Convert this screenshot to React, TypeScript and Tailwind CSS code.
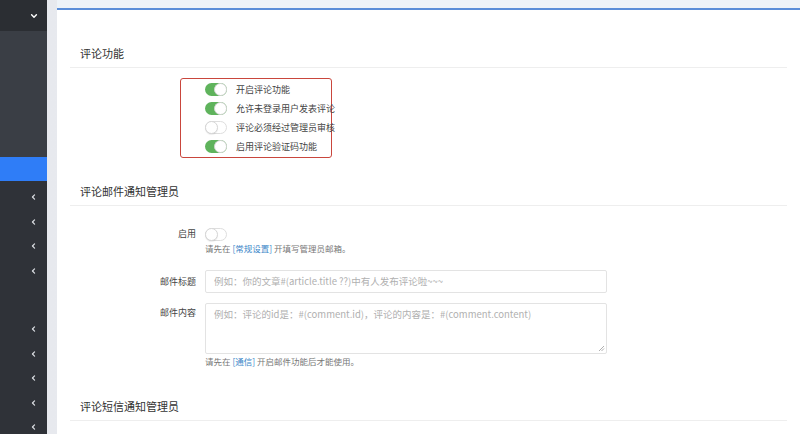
import React from "react";

const font = { fontFamily: '"Noto Sans CJK SC", "Noto Sans", sans-serif' };

function ChevronDown() {
  return (
    <svg width="8" height="8" viewBox="0 0 10 10" className="text-white">
      <path d="M2 3.5 L5 6.5 L8 3.5" fill="none" stroke="currentColor" strokeWidth="1.8" strokeLinecap="round" strokeLinejoin="round" />
    </svg>
  );
}

function ChevronLeft() {
  return (
    <svg width="7" height="8" viewBox="0 0 10 10" className="text-[#d9dce1]">
      <path d="M6.5 2 L3.5 5 L6.5 8" fill="none" stroke="currentColor" strokeWidth="1.8" strokeLinecap="round" strokeLinejoin="round" />
    </svg>
  );
}

function Toggle({ on }: { on: boolean }) {
  return on ? (
    <div className="w-[22px] h-[13px] rounded-full bg-[#5fb35c] relative shrink-0">
      <div className="absolute right-0 top-0 w-[13px] h-[13px] rounded-full bg-white border border-[#d6d6d6]" />
    </div>
  ) : (
    <div className="w-[22px] h-[13px] rounded-full bg-white border border-[#dedede] relative shrink-0">
      <div className="absolute left-[-1px] top-[-1px] w-[13px] h-[13px] rounded-full bg-white border border-[#d6d6d6] shadow-[0_1px_1px_rgba(0,0,0,0.08)]" />
    </div>
  );
}

function SectionHeading({ children }: { children: React.ReactNode }) {
  return (
    <div className="mx-[13px] border-b border-[#eeeeee] pb-[4px]">
      <div className="h-[20px] leading-[20px] pl-[10px] text-[11px] text-[#333]">{children}</div>
    </div>
  );
}

const sideRows: { h: number; chevron: boolean }[] = [
  { h: 24.5, chevron: true },
  { h: 24.5, chevron: true },
  { h: 24.5, chevron: true },
  { h: 24.5, chevron: true },
  { h: 33.75, chevron: false },
  { h: 24.5, chevron: true },
  { h: 24.5, chevron: true },
  { h: 24.5, chevron: true },
  { h: 24.5, chevron: true },
  { h: 24.5, chevron: true },
];

export default function App() {
  return (
    <div className="w-[800px] h-[434px] overflow-hidden flex bg-[#f1f3f6]" style={font}>
      {/* Sidebar */}
      <div className="w-[47px] shrink-0 bg-[#2f3238] flex flex-col overflow-hidden">
        <div className="h-[31px] shrink-0 bg-[#2b2e33] flex items-center justify-end pr-[9px]">
          <ChevronDown />
        </div>
        <div className="h-[126px] shrink-0 bg-[#3a3e45]" />
        <div className="h-[24px] shrink-0 bg-[#2f7df7]" />
        <div className="flex flex-col pt-[4px] shrink-0">
          {sideRows.map((r, i) => (
            <div key={i} style={{ height: r.h }} className="flex items-center justify-end pr-[10px] shrink-0">
              {r.chevron ? <ChevronLeft /> : null}
            </div>
          ))}
        </div>
      </div>

      {/* Main */}
      <div className="flex-1 flex flex-col pl-[10px] bg-gradient-to-r from-[#e7e9ee] to-[#f4f6f8] bg-no-repeat">
        <div className="h-[8px] shrink-0 bg-[#eef3f8]" />
        <div className="flex-1 bg-white border-t-2 border-[#5b8ed8] pt-[33px]">
          <SectionHeading>评论功能</SectionHeading>

          <div className="mt-[10px] ml-[123px] w-[152px] h-[80px] border-[1.5px] border-[#c9463d] rounded-[3px] flex flex-col justify-center pl-[24px]">
            {[
              { on: true, t: "开启评论功能" },
              { on: true, t: "允许未登录用户发表评论" },
              { on: false, t: "评论必须经过管理员审核" },
              { on: true, t: "启用评论验证码功能" },
            ].map((r, i) => (
              <div key={i} className="h-[19px] flex items-center gap-[9px]">
                <Toggle on={r.on} />
                <span className="text-[9px] text-[#444] leading-none whitespace-nowrap">{r.t}</span>
              </div>
            ))}
          </div>

          <div className="mt-[23px]">
            <SectionHeading>评论邮件通知管理员</SectionHeading>
          </div>

          <div className="mx-[13px] pt-[20px]">
            <div className="flex">
              <div className="w-[126px] shrink-0 text-right text-[9px] text-[#444] h-[14px] leading-[14px] mt-[1px]">启用</div>
              <div className="ml-[9px] flex flex-col">
                <div className="h-[16px] flex items-center">
                  <Toggle on={false} />
                </div>
                <div className="text-[8.5px] text-[#777] leading-[12px]">
                  请先在 <span className="text-[#3a86c8]">[常规设置]</span> 开填写管理员邮箱。
                </div>
              </div>
            </div>

            <div className="flex mt-[16px] items-center">
              <div className="w-[126px] shrink-0 text-right text-[9px] text-[#444]">邮件标题</div>
              <div className="ml-[9px] w-[402px] h-[23px] border border-[#e3e3e3] rounded-[2px] flex items-center px-[8px] text-[9.5px] text-[#b0b0b0] whitespace-nowrap">
                例如：你的文章#(article.title ??)中有人发布评论啦~~~
              </div>
            </div>

            <div className="flex mt-[10px]">
              <div className="w-[126px] shrink-0 text-right text-[9px] text-[#444] pt-[4px] leading-[12px]">邮件内容</div>
              <div className="ml-[9px] flex flex-col">
                <div className="w-[402px] h-[51px] border border-[#e3e3e3] rounded-[2px] px-[8px] pt-[4px] text-[9.5px] text-[#b0b0b0] relative leading-[12px]">
                  例如：评论的id是：#(comment.id)，评论的内容是：#(comment.content)
                  <svg className="absolute right-[1px] bottom-[1px]" width="7" height="7" viewBox="0 0 7 7">
                    <path d="M6 1 L1 6 M6 3.5 L3.5 6" stroke="#9a9a9a" strokeWidth="0.8" />
                  </svg>
                </div>
                <div className="text-[8.5px] text-[#777] leading-[12px] mt-[1px]">
                  请先在 <span className="text-[#3a86c8]">[通信]</span> 开启邮件功能后才能使用。
                </div>
              </div>
            </div>
          </div>

          <div className="mt-[29px]">
            <SectionHeading>评论短信通知管理员</SectionHeading>
          </div>
        </div>
      </div>
    </div>
  );
}
